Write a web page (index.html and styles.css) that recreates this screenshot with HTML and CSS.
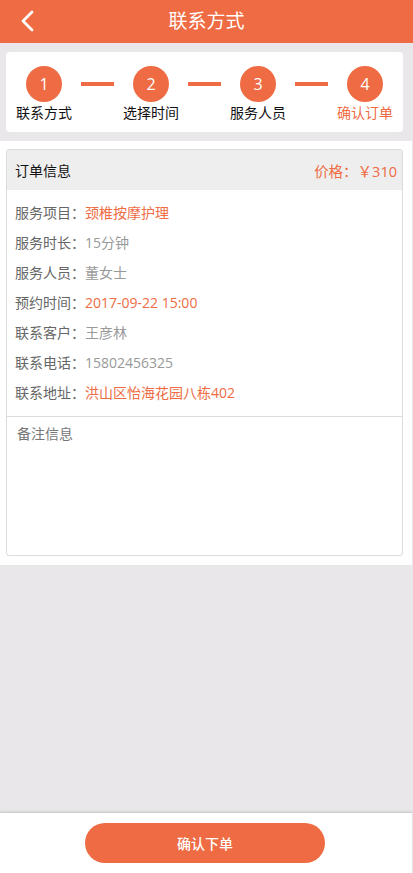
FILE: index.html
```html
<!DOCTYPE html>
<html lang="zh-CN">
<head>
<meta charset="utf-8">
<title>联系方式</title>
<link rel="stylesheet" href="styles.css">
</head>
<body>
<div class="page">
  <header class="topbar">
    <svg class="back" width="14" height="22" viewBox="0 0 14 22"><polyline points="11,2 2,11 11,20" fill="none" stroke="#fff" stroke-width="2.8" stroke-linecap="round" stroke-linejoin="round"/></svg>
    <h1 class="title">联系方式</h1>
  </header>
  <main class="main">
    <section class="steps-wrap">
      <div class="steps">
        <div class="step"><span class="circle">1</span><span class="step-label">联系方式</span></div>
        <span class="connector"></span>
        <div class="step"><span class="circle">2</span><span class="step-label">选择时间</span></div>
        <span class="connector"></span>
        <div class="step"><span class="circle">3</span><span class="step-label">服务人员</span></div>
        <span class="connector"></span>
        <div class="step active"><span class="circle">4</span><span class="step-label">确认订单</span></div>
      </div>
    </section>
    <section class="order-wrap">
      <div class="order">
        <div class="order-head">
          <span class="order-title">订单信息</span>
          <span class="price">价格：￥310</span>
        </div>
        <ul class="rows">
          <li><span class="k">服务项目：</span><span class="v hl">颈椎按摩护理</span></li>
          <li><span class="k">服务时长：</span><span class="v">15分钟</span></li>
          <li><span class="k">服务人员：</span><span class="v">董女士</span></li>
          <li><span class="k">预约时间：</span><span class="v hl">2017-09-22 15:00</span></li>
          <li><span class="k">联系客户：</span><span class="v">王彦林</span></li>
          <li><span class="k">联系电话：</span><span class="v">15802456325</span></li>
          <li><span class="k">联系地址：</span><span class="v hl">洪山区怡海花园八栋402</span></li>
        </ul>
        <div class="remark">备注信息</div>
      </div>
    </section>
  </main>
  <footer class="footer">
    <button class="submit">确认下单</button>
  </footer>
</div>
</body>
</html>
```

FILE: styles.css
```css
* { box-sizing: border-box; }
html, body { margin: 0; padding: 0; }
body {
  background: #e9e7ea;
  font-family: "Open Sans", "Noto Sans CJK SC", sans-serif;
  font-size: 14px;
  color: #333;
}
.page {
  min-height: 873px;
  display: flex;
  flex-direction: column;
}
.topbar {
  height: 43px;
  background: #ee6b43;
  display: flex;
  align-items: center;
  justify-content: center;
  position: relative;
}
.back {
  position: absolute;
  left: 21px;
  top: 10px;
}
.title {
  margin: 0;
  color: #fff;
  font-size: 19px;
  font-weight: normal;
  line-height: 43px;
}
.main { flex: 1; }
.steps-wrap {
  padding: 9px 10px 9px 6px;
}
.steps {
  background: #fff;
  border-radius: 4px;
  padding: 14px 8px 9px 8px;
  display: flex;
  align-items: flex-start;
}
.step {
  width: 60px;
  display: flex;
  flex-direction: column;
  align-items: center;
}
.circle {
  width: 36px;
  height: 36px;
  border-radius: 50%;
  background: #ee6b43;
  color: #fff;
  font-size: 16px;
  display: flex;
  align-items: center;
  justify-content: center;
}
.step-label {
  margin-top: 1px;
  line-height: 20px;
  white-space: nowrap;
  color: #111;
}
.step.active .step-label { color: #ee6b43; }
.connector {
  flex: 1;
  height: 4px;
  margin: 16px 7px 0;
  background: #ee6b43;
}
.order-wrap {
  background: #fff;
  margin-right: 1px;
  padding: 8px 9px 9px 6px;
}
.order {
  border: 1px solid #dcdcdc;
  border-radius: 3px;
  overflow: hidden;
}
.order-head {
  height: 40px;
  background: #eeeeee;
  display: flex;
  align-items: center;
  justify-content: space-between;
  padding: 0 5px 0 8px;
}
.order-title { color: #111; }
.price { color: #ee6b43; font-size: 14.5px; }
.rows {
  list-style: none;
  margin: 0;
  padding: 8px 8px;
  border-bottom: 1px solid #dcdcdc;
}
.rows li {
  line-height: 30px;
  height: 30px;
}
.k { color: #666; }
.v { color: #999; }
.v.hl { color: #ee6b43; }
.remark {
  height: 138px;
  padding: 8px 10px;
  color: #777;
  line-height: 18px;
}
.footer {
  height: 61px;
  background: #fff;
  margin-right: 1px;
  border-top: 1px solid #cfcfcf;
  box-shadow: 0 -1px 2px rgba(0,0,0,0.08);
  display: flex;
  align-items: center;
  justify-content: center;
}
.submit {
  width: 240px;
  height: 40px;
  border: 0;
  border-radius: 20px;
  background: #ee6b43;
  color: #fff;
  font-family: "Noto Sans CJK SC", sans-serif;
  font-size: 14px;
  font-weight: 500;
  margin-left: -2px;
}
```
